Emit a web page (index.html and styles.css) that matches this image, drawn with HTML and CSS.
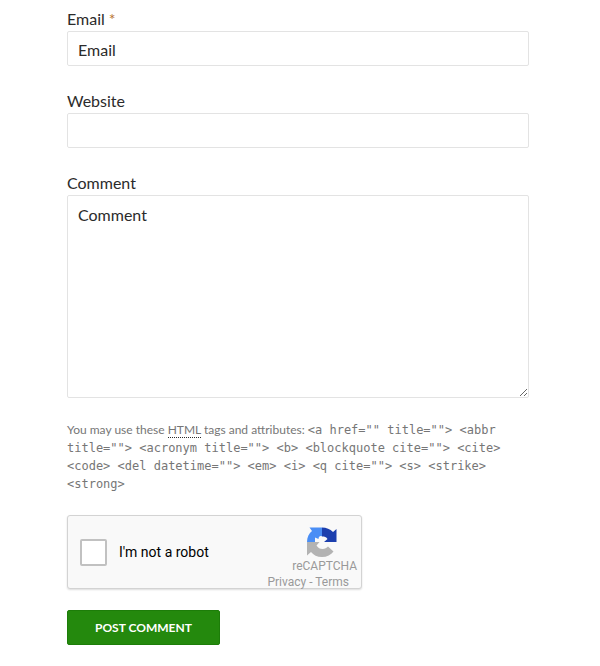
FILE: index.html
```html
<!DOCTYPE html>
<html lang="en">
<head>
<meta charset="utf-8">
<title>Leave a comment</title>
<link rel="stylesheet" href="styles.css">
</head>
<body>
<form class="comment-form">
  <div class="field">
    <label for="email">Email <span class="required">*</span></label>
    <input class="control" id="email" type="text" value="Email">
  </div>
  <div class="field">
    <label for="website">Website</label>
    <input class="control" id="website" type="text">
  </div>
  <div class="field">
    <label for="comment">Comment</label>
    <textarea class="control message" id="comment">Comment</textarea>
  </div>
  <p class="allowed-tags">You may use these <abbr>HTML</abbr> tags and attributes: <code>&lt;a href="" title=""&gt; &lt;abbr title=""&gt; &lt;acronym title=""&gt; &lt;b&gt; &lt;blockquote cite=""&gt; &lt;cite&gt; &lt;code&gt; &lt;del datetime=""&gt; &lt;em&gt; &lt;i&gt; &lt;q cite=""&gt; &lt;s&gt; &lt;strike&gt; &lt;strong&gt;</code></p>
  <div class="captcha">
    <input class="captcha-check" id="robot" type="checkbox">
    <label class="captcha-label" for="robot">I'm not a robot</label>
    <div class="captcha-brand">
      <svg class="captcha-logo" viewBox="0 0 30 30" aria-hidden="true">
        <path fill="#4a8ef5" d="M0 15C0 10 2 6.500 5 4L2.500 0.500H15V9.500C13.500 8.500 11.500 9.500 11.500 12L8 10.500V15Z"/>
        <path fill="#1c3fae" d="M15 0.500C19.500 0.500 23 2 26 5L29.500 2V15H17L20.500 12C19.500 10 17.500 9.500 15 9.500Z"/>
        <path fill="#b3b3b3" d="M0 15H12.500L9.500 18.500C11 21 13 22 15.500 22C18 22 19.500 21 21 19.500L26.500 24.500C24 28 20 30 15 30C10 30 6.500 28 4 25L0 28.500Z"/>
      </svg>
      <span>reCAPTCHA</span>
      <span class="captcha-links"><a href="#">Privacy</a> - <a href="#">Terms</a></span>
    </div>
  </div>
  <button class="submit" type="submit">Post Comment</button>
</form>
</body>
</html>
```
FILE: styles.css
```css
* {
  box-sizing: border-box;
}

body {
  margin: 0;
  background: #fff;
  color: #2b2b2b;
  font: 16px/24px Lato, sans-serif;
}

.comment-form {
  padding: 7px 71px 20px 67px;
}

.field {
  margin-bottom: 23px;
}

.field label {
  display: block;
}

.required {
  color: #b8752f;
}

.control {
  display: block;
  width: 100%;
  height: 35px;
  margin: 0;
  padding: 7px 10px 6px;
  border: 1px solid #e3e3e3;
  border-radius: 2px;
  background: #fff;
  color: #2b2b2b;
  font: inherit;
}

.message {
  height: 203px;
  resize: vertical;
}

.allowed-tags {
  margin: 0 0 22px;
  color: #767676;
  font-size: 12px;
  line-height: 18px;
}

.allowed-tags abbr {
  border-bottom: 1px dotted #2b2b2b;
}

.allowed-tags code {
  font: 12px/17px "DejaVu Sans Mono", monospace;
}

.captcha {
  display: flex;
  align-items: center;
  width: 295px;
  height: 74px;
  margin-bottom: 21px;
  padding: 0 4px 0 12px;
  border: 1px solid #d3d3d3;
  border-radius: 3px;
  background: #f9f9f9;
  box-shadow: 0 1px 2px #ddd;
}

.captcha-check {
  width: 27px;
  height: 27px;
  margin: 0 12px 0 0;
  border: 2px solid #c1c1c1;
  border-radius: 2px;
  background: #fff;
  appearance: none;
}

.captcha-label {
  color: #000;
  font: 14px/18px Roboto, sans-serif;
}

.captcha-brand {
  display: flex;
  flex-direction: column;
  align-items: flex-end;
  align-self: flex-start;
  margin-left: auto;
  padding-top: 11px;
  color: #999;
  font: 12px/16px Roboto, sans-serif;
}

.captcha-logo {
  width: 30px;
  height: 30px;
  margin: 0 20px 1px 0;
}

.captcha-links {
  padding-right: 8px;
}

.captcha-links a {
  color: inherit;
  text-decoration: none;
}

.submit {
  display: block;
  height: 35px;
  padding: 0 27px;
  border: 1px solid #1d7d09;
  border-radius: 2px;
  background: #24890d;
  color: #fff;
  font: bold 12px/16px Lato, sans-serif;
  text-transform: uppercase;
}
```
